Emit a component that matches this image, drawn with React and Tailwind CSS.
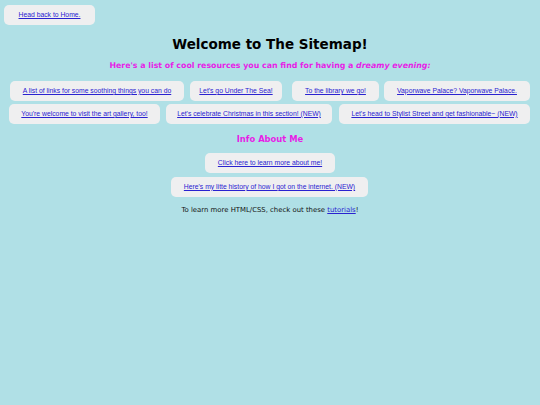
import React from "react";

const linkCls = "text-[#2a22d0] underline";
const btn = "shrink-0 h-[20px] rounded-[5px] bg-[#efeff0] flex items-center justify-center text-[6.8px] font-['Liberation_Sans',Arial,sans-serif]";

function B({ w, className = "", children }) {
  return (
    <div className={btn + " " + className} style={{ width: w }}>
      <a href="#" className={linkCls}>{children}</a>
    </div>
  );
}

export default function App() {
  return (
    <div className="w-[540px] h-[405px] bg-[#b0e0e6] font-['DejaVu_Sans',Verdana,sans-serif] overflow-hidden">
      <div className="pt-[5px] pl-[4px]">
        <B w="91px">Head back to Home.</B>
      </div>
      <h1 className="mt-[11px] text-center text-[13.5px] leading-[16px] font-bold text-black">Welcome to The Sitemap!</h1>
      <h2 className="mt-[8px] text-center text-[7.85px] leading-[12px] font-bold text-[#e61ee6]">
        Here's a list of cool resources you can find for having a <em>dreamy evening:</em>
      </h2>
      <div className="mt-[9px] flex pl-[10px]">
        <B w="174px">A list of links for some soothing things you can do</B>
        <B w="92px" className="ml-[6px]">Let's go Under The Sea!</B>
        <B w="87px" className="ml-[10px]">To the library we go!</B>
        <B w="146px" className="ml-[5px]">Vaporwave Palace? Vaporwave Palace.</B>
      </div>
      <div className="mt-[3px] flex pl-[9px]">
        <B w="151px">You're welcome to visit the art gallery, too!</B>
        <B w="166px" className="ml-[6px]">Let's celebrate Christmas in this section! (NEW)</B>
        <B w="191px" className="ml-[7px]">Let's head to Stylist Street and get fashionable~ (NEW)</B>
      </div>
      <h2 className="mt-[9px] text-center text-[8.4px] leading-[12px] font-bold text-[#e61ee6]">Info About Me</h2>
      <div className="mt-[8px] flex flex-col items-center gap-[4px]">
        <B w="130px">Click here to learn more about me!</B>
        <div className="pr-[1px]"><B w="197px">Here's my litte history of how I got on the internet. (NEW)</B></div>
      </div>
      <p className="mt-[7px] text-center text-[6.9px] leading-[12px] text-[#111]">
        To learn more HTML/CSS, check out these <a href="#" className={linkCls}>tutorials</a>!
      </p>
    </div>
  );
}
